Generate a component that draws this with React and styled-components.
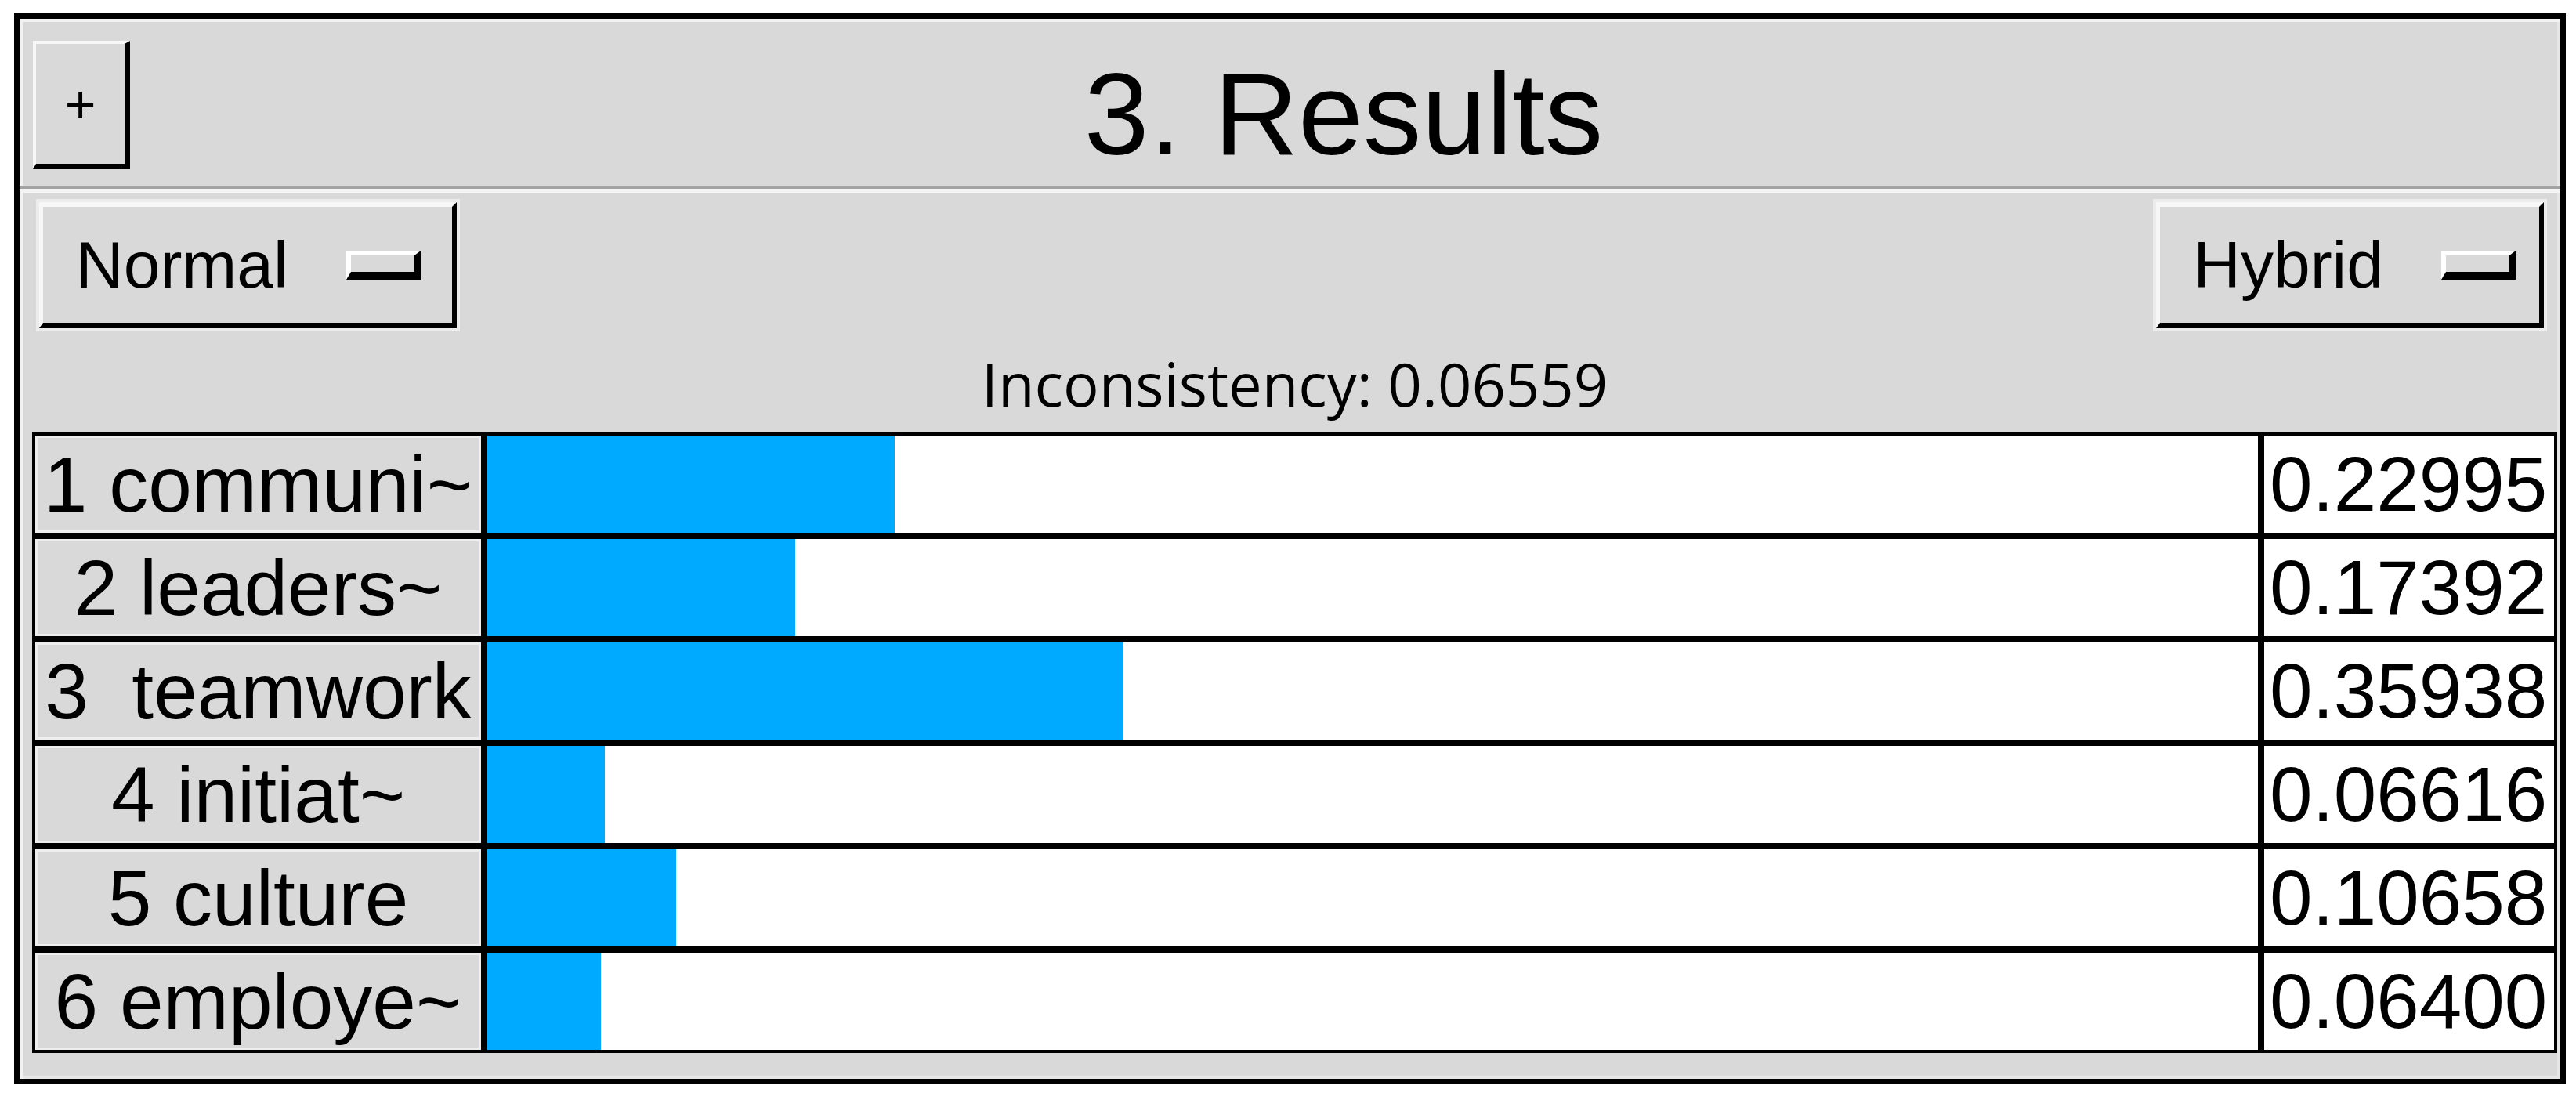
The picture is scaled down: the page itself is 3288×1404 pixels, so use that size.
import React from "react";
import styled, { createGlobalStyle } from "styled-components";

const GlobalStyle = createGlobalStyle`
  html, body {
    margin: 0;
    padding: 0;
    background: #ffffff;
  }
  * {
    box-sizing: border-box;
  }
`;

const Frame = styled.section`
  margin: 17px 0 0 18px;
  width: 3257px;
  height: 1367px;
  border: 7px solid #000;
  background-color: #d9d9d9;
  box-shadow: inset 4px 4px 0 #f2f2f2, inset -4px -4px 0 #e6e6e6;
  display: flex;
  flex-direction: column;
  font-family: "Liberation Sans", Arial, sans-serif;
  color: #000;
`;

const Header = styled.header`
  height: 217px;
  display: flex;
  align-items: flex-start;
  padding: 28px 4px 0 17px;
  border-bottom: 4px solid #a3a3a3;
`;

const PlusButton = styled.button`
  width: 124px;
  height: 164px;
  flex: none;
  background-color: #d9d9d9;
  border-style: solid;
  border-width: 4px 7px 7px 4px;
  border-color: #f7f7f7 #000 #000 #f7f7f7;
  font-family: "Liberation Sans", Arial, sans-serif;
  font-size: 68px;
  color: #000;
  padding: 0;
  display: flex;
  align-items: center;
  justify-content: center;
`;

const Title = styled.h1`
  flex: 1;
  margin: 0;
  text-align: center;
  font-size: 149px;
  font-weight: normal;
  line-height: 1;
  padding-top: 19px;
`;

const Body = styled.div`
  flex: 1;
  display: flex;
  flex-direction: column;
  border-top: 5px solid #f4f4f4;
  padding: 12px 4px 0 16px;
`;

const MenuRow = styled.div`
  display: flex;
  justify-content: space-between;
  padding: 0 17px 0 9px;
`;

const MenuButton = styled.div`
  height: 161px;
  display: flex;
  align-items: center;
  gap: 74px;
  padding: 0 ${(p) => p.$padRight}px 0 42px;
  background-color: #d9d9d9;
  border-style: solid;
  border-width: 6px 6px 7px 5px;
  border-color: #f7f7f7 #000 #000 #f7f7f7;
  box-shadow: 0 0 0 4px #ececec;
  font-size: 84px;
`;

const Indicator = styled.span`
  width: 95px;
  height: 37px;
  border-style: solid;
  border-width: 6px 8px 10px 6px;
  border-color: #fff #000 #000 #fff;
  background-color: #d9d9d9;
`;

const Status = styled.p`
  margin: 33px 0 24px;
  text-align: center;
  font-family: "Open Sans", "Noto Sans", sans-serif;
  font-size: 76px;
  line-height: 1;
  height: 76px;
`;

const Table = styled.div`
  display: flex;
  flex-direction: column;
`;

const Row = styled.div`
  display: flex;
  height: 132px;
`;

const LabelCell = styled.div`
  width: 577px;
  flex: none;
  border: 4px solid #000;
  background-color: #d9d9d9;
  box-shadow: inset 0 0 0 3px #eeeeee;
  display: flex;
  align-items: center;
  justify-content: center;
  font-size: 100px;
  white-space: pre;
  overflow: hidden;
`;

const BarCell = styled.div`
  flex: 1;
  border: 4px solid #000;
  background-color: #fff;
  display: flex;
`;

const BarFill = styled.div`
  height: 100%;
  background-color: #00aaff;
`;

const ValueCell = styled.div`
  width: 378px;
  flex: none;
  border: 4px solid #000;
  background-color: #fff;
  display: flex;
  align-items: center;
  padding-left: 7px;
  font-size: 98px;
  white-space: nowrap;
  overflow: hidden;
`;

const results = [
  { label: "1 communi~", value: 0.22995 },
  { label: "2 leaders~", value: 0.17392 },
  { label: "3  teamwork", value: 0.35938 },
  { label: "4 initiat~", value: 0.06616 },
  { label: "5 culture", value: 0.10658 },
  { label: "6 employe~", value: 0.064 },
];

function Menu({ label, padRight }) {
  return (
    <MenuButton $padRight={padRight}>
      <span>{label}</span>
      <Indicator />
    </MenuButton>
  );
}

export default function App() {
  return (
    <>
      <GlobalStyle />
      <Frame>
        <Header>
          <PlusButton>+</PlusButton>
          <Title>3. Results</Title>
        </Header>
        <Body>
          <MenuRow>
            <Menu label="Normal" padRight={40} />
            <Menu label="Hybrid" padRight={30} />
          </MenuRow>
          <Status>Inconsistency: 0.06559</Status>
          <Table>
            {results.map((r) => (
              <Row key={r.label}>
                <LabelCell>{r.label}</LabelCell>
                <BarCell>
                  <BarFill style={{ width: `${r.value * 100}%` }} />
                </BarCell>
                <ValueCell>{r.value.toFixed(5)}</ValueCell>
              </Row>
            ))}
          </Table>
        </Body>
      </Frame>
    </>
  );
}
